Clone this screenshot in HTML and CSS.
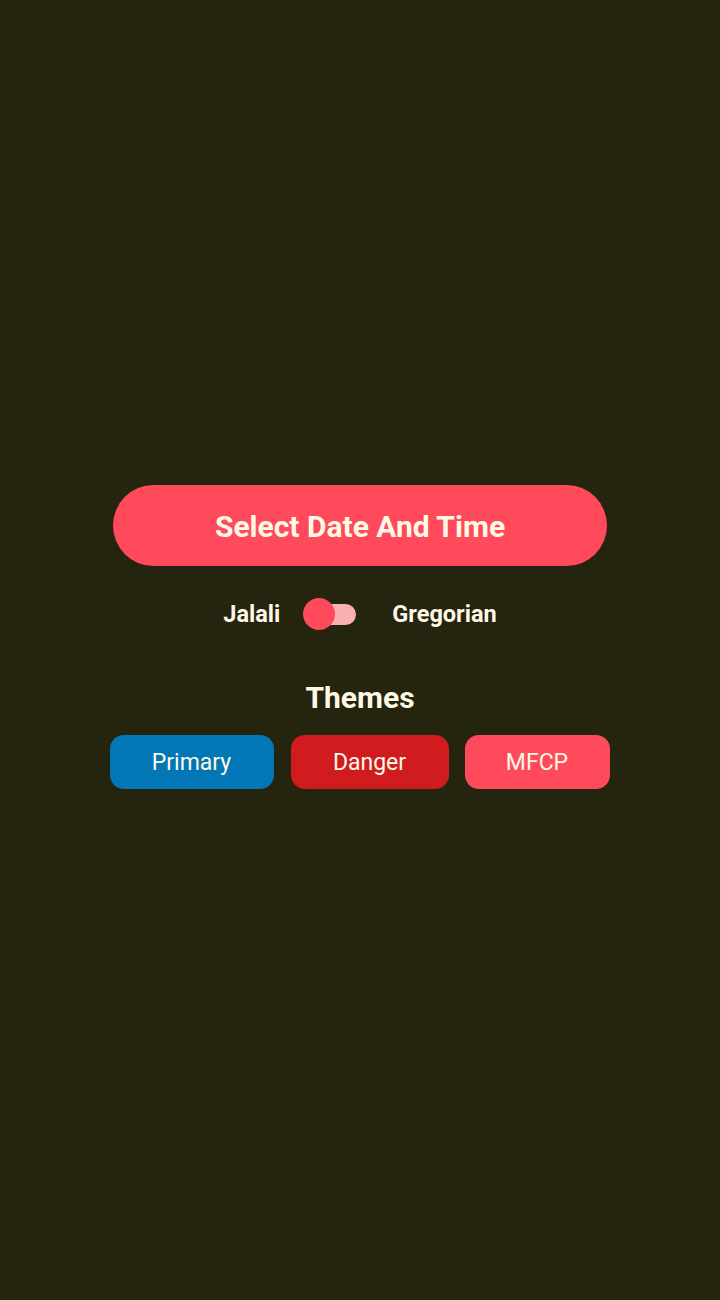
FILE: index.html
```html
<!DOCTYPE html>
<html>
<head>
<meta charset="utf-8">
<link rel="stylesheet" href="styles.css">
</head>
<body>
<main class="screen">
  <button class="main-btn">Select Date And Time</button>
  <div class="toggle-row">
    <span class="toggle-label">Jalali</span>
    <span class="switch"><span class="track"></span><span class="thumb"></span></span>
    <span class="toggle-label">Gregorian</span>
  </div>
  <h2 class="themes-title">Themes</h2>
  <div class="themes">
    <button class="theme primary">Primary</button>
    <button class="theme danger">Danger</button>
    <button class="theme mfcp">MFCP</button>
  </div>
</main>
</body>
</html>
```
FILE: styles.css
```css
html, body {
  margin: 0;
  padding: 0;
  background: #24240f;
}
body {
  width: 720px;
  height: 1300px;
  font-family: Roboto, "Noto Sans", sans-serif;
  color: #fff8e6;
}
.screen {
  display: flex;
  flex-direction: column;
  align-items: center;
  padding-top: 485px;
}
.main-btn {
  width: 494px;
  height: 81px;
  border: none;
  border-radius: 41px;
  background: #ff4a5b;
  color: #fff8e6;
  font-family: inherit;
  font-weight: 700;
  font-size: 30px;
  padding: 0;
  padding-top: 2px;
}
.toggle-row {
  display: flex;
  align-items: center;
  margin-top: 31px;
  height: 34px;
}
.toggle-label {
  font-weight: 700;
  font-size: 23.5px;
}
.switch {
  position: relative;
  width: 53px;
  height: 34px;
  margin: 0 36px 0 23px;
}
.track {
  position: absolute;
  left: 4px;
  top: 7px;
  width: 49px;
  height: 21px;
  border-radius: 11px;
  background: #f7b2b0;
}
.thumb {
  position: absolute;
  left: 0;
  top: 1px;
  width: 32px;
  height: 32px;
  border-radius: 50%;
  background: #ff4a5b;
}
.themes-title {
  margin: 50px 0 0;
  font-size: 30px;
  font-weight: 700;
  line-height: 34px;
}
.themes {
  display: flex;
  gap: 16px;
  margin-top: 20px;
  margin-left: -1px;
}
.theme {
  height: 54px;
  border: none;
  border-radius: 14px;
  color: #fff8e6;
  font-family: inherit;
  font-size: 23px;
  font-weight: 400;
  padding: 0;
}
.primary { width: 164px; background: #0277b7; }
.danger { width: 158px; background: #d01c1e; margin-left: 1px; }
.mfcp { width: 145px; background: #ff4a5b; }
```
